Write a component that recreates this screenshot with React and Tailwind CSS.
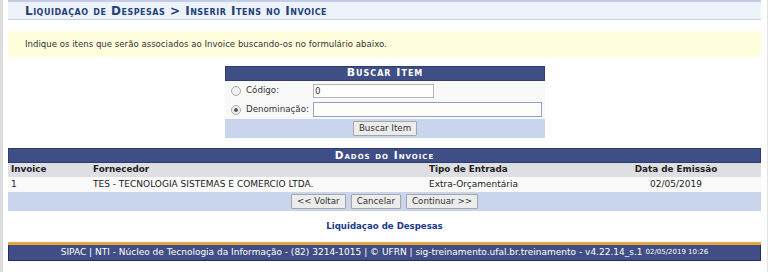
import React from 'react'

const font = { fontFamily: '"DejaVu Sans", Verdana, sans-serif' }

function Btn({ children }) {
  return (
    <button className="h-[15px] px-[5px] border border-[#a6a6a6] bg-[#ececec] text-[8.7px] leading-[13px] text-[#333] rounded-[1px]">
      {children}
    </button>
  )
}

function Radio({ checked }) {
  return (
    <span className="w-[10px] h-[10px] rounded-full border border-[#a9a9a9] bg-[#f1f1f1] flex items-center justify-center">
      {checked && <span className="w-[4px] h-[4px] rounded-full bg-[#555]" />}
    </span>
  )
}

export default function App() {
  return (
    <div className="w-[768px] h-[272px] bg-white overflow-hidden flex" style={font}>
      <div className="w-[3px] bg-[#dcdcdc]" />
      <div className="flex-1 pl-[5px] pr-[6px] border-r border-[#e4e4e4]">
        <div className="h-[20px] bg-[#eef2fb] border-t-2 border-b border-[#c3cde8] flex items-center pl-[17px]">
          <h2 className="text-[12px] font-bold text-[#223f78] tracking-[0.5px] [font-variant:small-caps] leading-none">
            Liquidaçao de Despesas &gt; Inserir Itens no Invoice
          </h2>
        </div>

        <div className="mt-[11px] h-[26px] bg-[#ffffde] flex items-center pl-[17px] text-[8.6px] text-[#333]">
          Indique os itens que serão associados ao Invoice buscando-os no formulário abaixo.
        </div>

        <div className="mt-[9px] w-[320px] ml-[217px]">
          <div className="h-[15px] bg-[#3f4f86] border border-[#2f3d6e] flex items-center justify-center text-white text-[11px] font-bold tracking-[1px] [font-variant:small-caps]">
            Buscar Item
          </div>
          <div className="bg-[#f9f9f9] text-[8.7px] text-[#333]">
            <div className="h-[19px] flex items-center">
              <span className="ml-[6px] mr-[5px]"><Radio /></span>
              <span className="w-[67px]">Código:</span>
              <div className="w-[121px] h-[14px] border border-[#b5b5b5] bg-white text-[8.7px] leading-[12px] pl-[1px]">0</div>
            </div>
            <div className="h-[19px] flex items-center">
              <span className="ml-[6px] mr-[5px]"><Radio checked /></span>
              <span className="w-[67px]">Denominação:</span>
              <div className="w-[229px] h-[15px] border border-[#8aa2cc] bg-[#fffdf7]" />
            </div>
          </div>
          <div className="h-[19px] bg-[#c8d5ec] flex items-center justify-center">
            <Btn>Buscar Item</Btn>
          </div>
        </div>

        <div className="mt-[10px]">
          <div className="h-[15px] bg-[#3f4f86] border border-[#2f3d6e] flex items-center justify-center text-white text-[10.5px] font-bold tracking-[1px] [font-variant:small-caps]">
            Dados do Invoice
          </div>
          <table className="w-full text-[9px] text-[#222] border-collapse">
            <thead>
              <tr className="h-[14px] bg-[#dedfe3] font-bold text-left text-[8.8px]">
                <th className="pl-[3px] w-[85px]">Invoice</th>
                <th className="w-[336px]">Fornecedor</th>
                <th className="w-[193px]">Tipo de Entrada</th>
                <th className="text-center pr-[31px]">Data de Emissão</th>
              </tr>
            </thead>
            <tbody>
              <tr className="h-[15px] bg-[#fafafa]">
                <td className="pl-[3px]">1</td>
                <td>TES - TECNOLOGIA SISTEMAS E COMERCIO LTDA.</td>
                <td>Extra-Orçamentária</td>
                <td className="text-center pr-[31px]">02/05/2019</td>
              </tr>
            </tbody>
          </table>
          <div className="h-[19px] bg-[#c8d5ec] flex items-center justify-center gap-[5px]">
            <Btn>&lt;&lt; Voltar</Btn>
            <Btn>Cancelar</Btn>
            <Btn>Continuar &gt;&gt;</Btn>
          </div>
        </div>

        <div className="h-[31px] flex items-center justify-center">
          <a className="text-[8.6px] font-bold text-[#1b3a8a]">Liquidaçao de Despesas</a>
        </div>

        <div className="h-[3px] bg-[#e7a446]" />
        <div className="h-[16px] bg-[#404e85] border-b border-x border-[#1f2d66] flex items-center justify-center text-white text-[9px]">
          SIPAC | NTI - Núcleo de Tecnologia da Informação - (82) 3214-1015 | © UFRN | sig-treinamento.ufal.br.treinamento - v4.22.14_s.1
          <span className="ml-[3px] text-[7px]">02/05/2019 10:26</span>
        </div>
      </div>
    </div>
  )
}
